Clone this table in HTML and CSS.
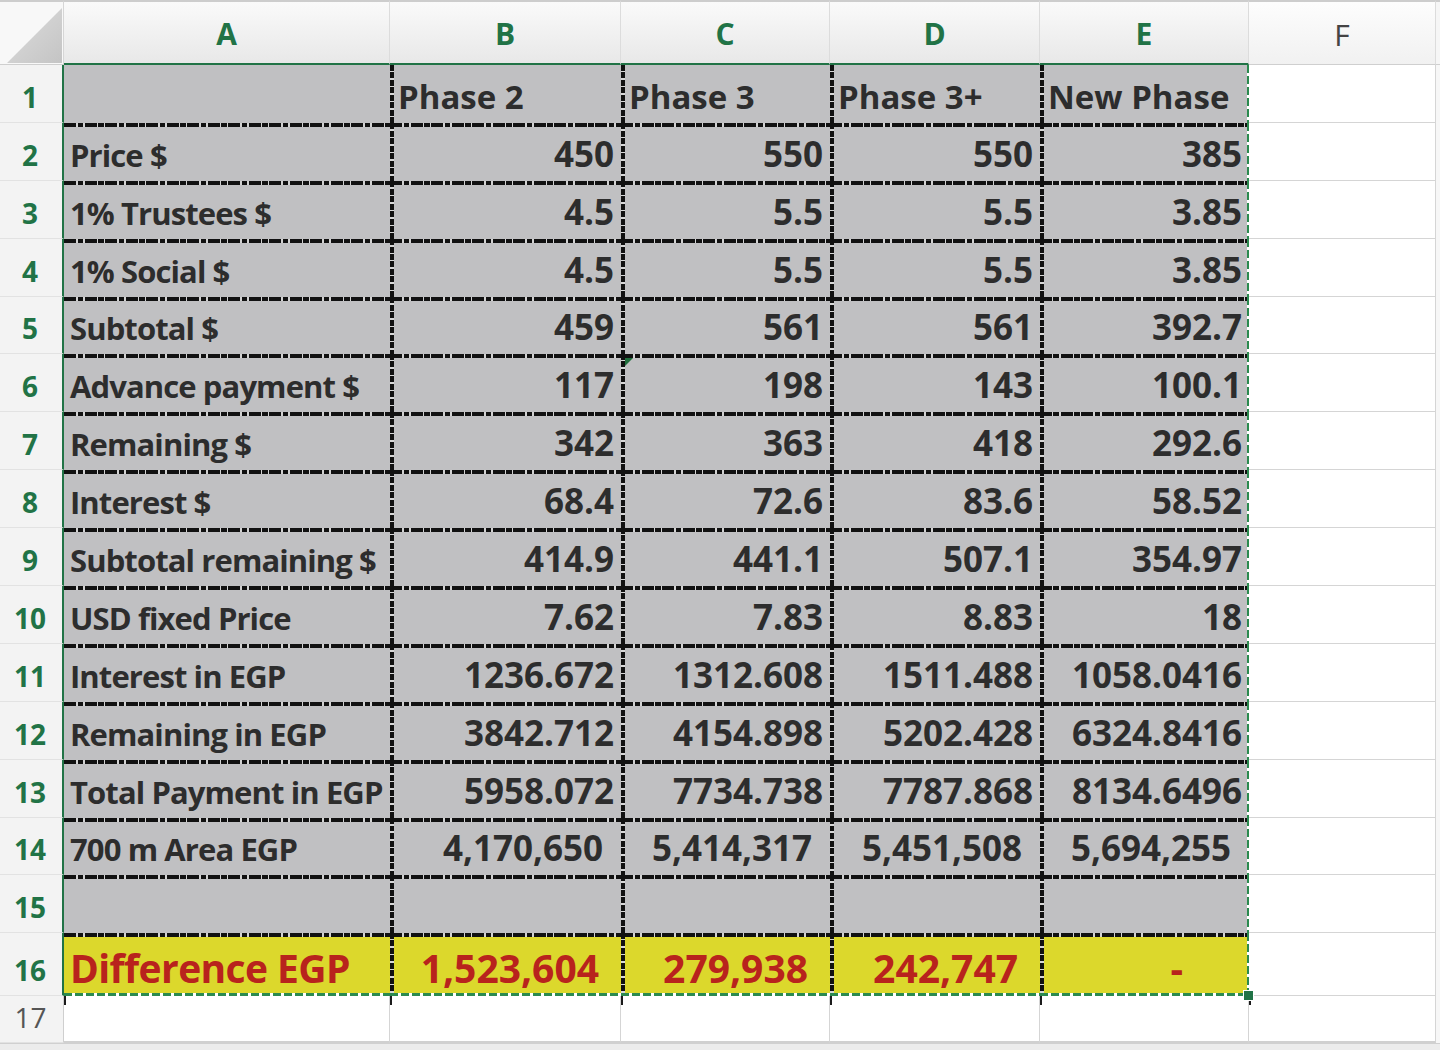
FILE: index.html
```html
<!DOCTYPE html>
<html lang="en">
<head>
<meta charset="utf-8">
<title>Phase comparison</title>
<link rel="stylesheet" href="styles.css">
</head>
<body>
<div class="sheet">
  <div class="corner"><svg width="55" height="55" viewBox="0 0 55 55"><defs><linearGradient id="cg" x1="0" y1="0" x2="1" y2="1"><stop offset="0" stop-color="#dedede"/><stop offset="1" stop-color="#c4c4c4"/></linearGradient></defs><polygon points="0,55 55,55 55,0" fill="url(#cg)"/></svg></div>
  <div class="ch s">A</div>
  <div class="ch s">B</div>
  <div class="ch s">C</div>
  <div class="ch s">D</div>
  <div class="ch s">E</div>
  <div class="ch f">F</div>
  <div class="ch x"></div>

  <div class="rh s">1</div>
  <div class="c a r1"></div>
  <div class="c hd r1">Phase 2</div>
  <div class="c hd r1">Phase 3</div>
  <div class="c hd r1">Phase 3+</div>
  <div class="c hd r1 e">New Phase</div>
  <div class="g"></div>
  <div class="x"></div>

  <div class="rh s">2</div>
  <div class="c a">Price $</div>
  <div class="c n">450</div>
  <div class="c n">550</div>
  <div class="c n">550</div>
  <div class="c n e">385</div>
  <div class="g"></div>
  <div class="x"></div>

  <div class="rh s">3</div>
  <div class="c a">1% Trustees $</div>
  <div class="c n">4.5</div>
  <div class="c n">5.5</div>
  <div class="c n">5.5</div>
  <div class="c n e">3.85</div>
  <div class="g"></div>
  <div class="x"></div>

  <div class="rh s">4</div>
  <div class="c a">1% Social $</div>
  <div class="c n">4.5</div>
  <div class="c n">5.5</div>
  <div class="c n">5.5</div>
  <div class="c n e">3.85</div>
  <div class="g"></div>
  <div class="x"></div>

  <div class="rh s">5</div>
  <div class="c a">Subtotal $</div>
  <div class="c n">459</div>
  <div class="c n">561</div>
  <div class="c n">561</div>
  <div class="c n e">392.7</div>
  <div class="g"></div>
  <div class="x"></div>

  <div class="rh s">6</div>
  <div class="c a">Advance payment $</div>
  <div class="c n">117</div>
  <div class="c n err">198</div>
  <div class="c n">143</div>
  <div class="c n e">100.1</div>
  <div class="g"></div>
  <div class="x"></div>

  <div class="rh s">7</div>
  <div class="c a">Remaining $</div>
  <div class="c n">342</div>
  <div class="c n">363</div>
  <div class="c n">418</div>
  <div class="c n e">292.6</div>
  <div class="g"></div>
  <div class="x"></div>

  <div class="rh s">8</div>
  <div class="c a">Interest $</div>
  <div class="c n">68.4</div>
  <div class="c n">72.6</div>
  <div class="c n">83.6</div>
  <div class="c n e">58.52</div>
  <div class="g"></div>
  <div class="x"></div>

  <div class="rh s">9</div>
  <div class="c a">Subtotal remaining $</div>
  <div class="c n">414.9</div>
  <div class="c n">441.1</div>
  <div class="c n">507.1</div>
  <div class="c n e">354.97</div>
  <div class="g"></div>
  <div class="x"></div>

  <div class="rh s">10</div>
  <div class="c a">USD fixed Price</div>
  <div class="c n">7.62</div>
  <div class="c n">7.83</div>
  <div class="c n">8.83</div>
  <div class="c n e">18</div>
  <div class="g"></div>
  <div class="x"></div>

  <div class="rh s">11</div>
  <div class="c a">Interest in EGP</div>
  <div class="c n">1236.672</div>
  <div class="c n">1312.608</div>
  <div class="c n">1511.488</div>
  <div class="c n e">1058.0416</div>
  <div class="g"></div>
  <div class="x"></div>

  <div class="rh s">12</div>
  <div class="c a">Remaining in EGP</div>
  <div class="c n">3842.712</div>
  <div class="c n">4154.898</div>
  <div class="c n">5202.428</div>
  <div class="c n e">6324.8416</div>
  <div class="g"></div>
  <div class="x"></div>

  <div class="rh s">13</div>
  <div class="c a">Total Payment in EGP</div>
  <div class="c n">5958.072</div>
  <div class="c n">7734.738</div>
  <div class="c n">7787.868</div>
  <div class="c n e">8134.6496</div>
  <div class="g"></div>
  <div class="x"></div>

  <div class="rh s">14</div>
  <div class="c a">700 m Area EGP</div>
  <div class="c n acc">4,170,650</div>
  <div class="c n acc">5,414,317</div>
  <div class="c n acc">5,451,508</div>
  <div class="c n acc e">5,694,255</div>
  <div class="g"></div>
  <div class="x"></div>

  <div class="rh s">15</div>
  <div class="c a"></div>
  <div class="c n"></div>
  <div class="c n"></div>
  <div class="c n"></div>
  <div class="c n e"></div>
  <div class="g"></div>
  <div class="x"></div>

  <div class="rh s">16</div>
  <div class="c a y">Difference EGP</div>
  <div class="c n y">1,523,604</div>
  <div class="c n y">279,938</div>
  <div class="c n y">242,747</div>
  <div class="c n y e dash hdl">-</div>
  <div class="g"></div>
  <div class="x"></div>

  <div class="rh">17</div>
  <div class="w tick"></div>
  <div class="w tick"></div>
  <div class="w tick"></div>
  <div class="w tick"></div>
  <div class="w tick"></div>
  <div class="g tick"></div>
  <div class="x"></div>

  <div class="foot"></div>
</div>
</body>
</html>
```

FILE: styles.css
```css
:root {
  --hd: repeating-linear-gradient(90deg, #111 0 12px, #d2d2d2 12px 13.5px, #111 13.5px 19px, #d2d2d2 19px 20.5px);
  --vd: repeating-linear-gradient(180deg, #111 0 6px, #d8d8d8 6px 7.5px);
  --gh: repeating-linear-gradient(90deg, #2b8a4f 0 8px, #ffffff 8px 11px);
  --gv: repeating-linear-gradient(180deg, #2b8a4f 0 8px, #ffffff 8px 11px);
  --green: #217346;
}

* {
  box-sizing: border-box;
}

body {
  margin: 0;
  width: 1440px;
  height: 1050px;
  overflow: hidden;
  background: #fff;
  font-family: "Open Sans", "Noto Sans", sans-serif;
}

.sheet {
  display: grid;
  grid-template-columns: 64px 326px 231px 209px 210px 209px 187px 1fr;
  grid-template-rows: 65px repeat(15, 57.9px) 62.5px 47px 1fr;
  height: 1050px;
}

/* corner select-all */
.corner {
  border-top: 2px solid #cdcdcd;
  border-right: 1px solid #d6d6d6;
  border-bottom: 1px solid #cfcfcf;
  background: #f8f8f8;
  display: flex;
  align-items: flex-end;
  justify-content: flex-end;
  padding: 0 1px 1px 0;
}

.corner svg {
  display: block;
}

/* column headers */
.ch {
  display: flex;
  align-items: flex-end;
  justify-content: center;
  padding-bottom: 14px;
  font-size: 30px;
  line-height: 1;
  border-top: 2px solid #cdcdcd;
  border-right: 1px solid #dcdcdc;
  background: linear-gradient(#fafafa, #e8e8e8);
}

.ch.s {
  color: var(--green);
  font-weight: 700;
  border-bottom: 2px solid var(--green);
}

.ch.f {
  color: #444;
  font-weight: 400;
  border-bottom: 1px solid #cfcfcf;
  background: linear-gradient(#fdfdfd, #f1f1f1);
}

.ch.x {
  border-right: 0;
  border-bottom: 1px solid #cfcfcf;
  background: #f6f6f6;
}

/* row headers */
.rh {
  display: flex;
  align-items: flex-end;
  justify-content: center;
  padding-bottom: 11px;
  padding-right: 2px;
  font-size: 28px;
  line-height: 1;
  color: #555;
  background: #f3f3f3;
  border-bottom: 1px solid #e2e2e2;
  border-right: 1px solid #cfcfcf;
}

.rh.s {
  color: var(--green);
  font-weight: 700;
  border-right: 2px solid var(--green);
}

/* data cells */
.c {
  --t: var(--hd);
  --l: var(--vd);
  --r: none;
  --b: none;
  --f: #c0c0c2;
  position: relative;
  display: flex;
  align-items: flex-end;
  padding: 0 6px 10px 6px;
  font-size: 31px;
  letter-spacing: -0.9px;
  font-weight: 700;
  line-height: 1;
  color: #2d2d2d;
  white-space: nowrap;
  background:
    var(--r) right top / 2px 100% no-repeat,
    var(--b) left bottom / 100% 3px no-repeat,
    var(--t) left top / 100% 4px no-repeat,
    var(--l) left top / 4px 100% no-repeat,
    var(--f);
}

.c.r1 {
  --t: none;
}

.c.a {
  --l: none;
}

.c.e {
  --r: var(--gv);
}

.c.hd {
  font-size: 33px;
  letter-spacing: 0;
  padding-left: 8px;
}

.c.n {
  justify-content: flex-end;
  font-size: 35px;
  letter-spacing: 0;
  padding-right: 7px;
}

.c.acc {
  padding-right: 18px;
}

.c.y {
  --b: var(--gh);
  --f: #dcd82c;
  color: #b8231d;
  font-size: 39px;
  letter-spacing: -0.6px;
  padding-bottom: 9px;
}

.c.n.y {
  font-size: 39px;
  letter-spacing: 0;
  padding-right: 22px;
}

.c.n.y.dash {
  padding-right: 66px;
}

.c.err::before {
  content: "";
  position: absolute;
  left: 4px;
  top: 4px;
  border-top: 8px solid #1f6e3c;
  border-right: 8px solid transparent;
}

.c.hdl::after {
  content: "";
  position: absolute;
  right: -5px;
  bottom: -5px;
  width: 9px;
  height: 9px;
  background: var(--green);
  border: 1px solid #fff;
  z-index: 3;
}

/* plain grid cells */
.g {
  background: #fff;
  border-right: 1px solid #d5d5d5;
  border-bottom: 1px solid #d5d5d5;
}

.w {
  background: #fff;
  border-right: 1px solid #d5d5d5;
  border-bottom: 2px solid #d0d0d0;
}

.g.tick,
.w.tick {
  background: linear-gradient(#1b1b1b, #1b1b1b) left top / 2px 9px no-repeat, #fff;
}

.g.tick {
  border-bottom: 2px solid #d0d0d0;
}

.x {
  background: #f7f7f7;
}

.foot {
  grid-column: 1 / -1;
  background: #ececec;
  border-top: 1px solid #d0d0d0;
}
```
